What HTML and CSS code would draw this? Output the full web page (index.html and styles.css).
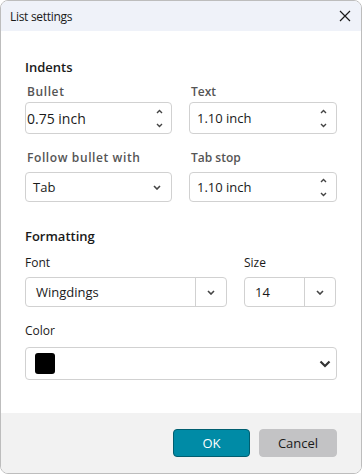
FILE: index.html
```html
<!DOCTYPE html>
<html lang="en">
<head>
    <meta charset="UTF-8">
    <title>List settings</title>
    <link rel="stylesheet" href="styles.css">
</head>
<body>
    <div class="dialog">
        <div class="title-bar">
            <div class="title">List settings</div>
            <svg class="close" width="12" height="12" viewBox="0 0 12 12"><path d="M1 1 L11 11 M11 1 L1 11" stroke="#1a1a1a" stroke-width="1.2" fill="none"/></svg>
        </div>

        <div class="content">
            <div class="section-title">Indents</div>
            <div class="grid">
                <div class="field">
                    <div class="label spaced">Bullet</div>
                    <div class="input bullet">
                        <span class="value">0.75 inch</span>
                        <span class="spin">
                            <svg width="7" height="5" viewBox="0 0 7 5"><path d="M1 4 L3.5 1.5 L6 4" stroke="#444" stroke-width="1.4" fill="none"/></svg>
                            <svg width="7" height="5" viewBox="0 0 7 5"><path d="M1 1 L3.5 3.5 L6 1" stroke="#444" stroke-width="1.4" fill="none"/></svg>
                        </span>
                    </div>
                </div>
                <div class="field">
                    <div class="label">Text</div>
                    <div class="input">
                        <span class="value">1.10 inch</span>
                        <span class="spin">
                            <svg width="7" height="5" viewBox="0 0 7 5"><path d="M1 4 L3.5 1.5 L6 4" stroke="#444" stroke-width="1.4" fill="none"/></svg>
                            <svg width="7" height="5" viewBox="0 0 7 5"><path d="M1 1 L3.5 3.5 L6 1" stroke="#444" stroke-width="1.4" fill="none"/></svg>
                        </span>
                    </div>
                </div>
                <div class="field row-two">
                    <div class="label spaced">Follow bullet with</div>
                    <div class="input short">
                        <span class="value">Tab</span>
                        <svg class="chev" width="8" height="5" viewBox="0 0 8 5"><path d="M1 1 L4 4 L7 1" stroke="#444" stroke-width="1.6" fill="none"/></svg>
                    </div>
                </div>
                <div class="field row-two">
                    <div class="label">Tab stop</div>
                    <div class="input short">
                        <span class="value">1.10 inch</span>
                        <span class="spin">
                            <svg width="7" height="5" viewBox="0 0 7 5"><path d="M1 4 L3.5 1.5 L6 4" stroke="#444" stroke-width="1.4" fill="none"/></svg>
                            <svg width="7" height="5" viewBox="0 0 7 5"><path d="M1 1 L3.5 3.5 L6 1" stroke="#444" stroke-width="1.4" fill="none"/></svg>
                        </span>
                    </div>
                </div>
            </div>

            <div class="section-title formatting">Formatting</div>
            <div class="font-row">
                <div class="field font-field">
                    <div class="label">Font</div>
                    <div class="combo">
                        <span class="value">Wingdings</span>
                        <span class="combo-btn">
                            <svg width="8" height="5" viewBox="0 0 8 5"><path d="M1 1 L4 4 L7 1" stroke="#444" stroke-width="1.6" fill="none"/></svg>
                        </span>
                    </div>
                </div>
                <div class="field size-field">
                    <div class="label">Size</div>
                    <div class="combo">
                        <span class="value">14</span>
                        <span class="combo-btn">
                            <svg width="8" height="5" viewBox="0 0 8 5"><path d="M1 1 L4 4 L7 1" stroke="#444" stroke-width="1.6" fill="none"/></svg>
                        </span>
                    </div>
                </div>
            </div>

            <div class="field color-field">
                <div class="label">Color</div>
                <div class="input color-input">
                    <span class="swatch"></span>
                    <svg class="chev" width="12" height="8" viewBox="0 0 12 8"><path d="M1.5 1.5 L6 6 L10.5 1.5" stroke="#333" stroke-width="2.2" fill="none"/></svg>
                </div>
            </div>
        </div>

        <div class="footer">
            <button class="btn btn-ok">OK</button>
            <button class="btn btn-cancel">Cancel</button>
        </div>
    </div>
</body>
</html>
```

FILE: styles.css
```css
* {
    margin: 0;
    padding: 0;
    box-sizing: border-box;
}

body {
    font-family: 'Open Sans', 'Noto Sans', sans-serif;
    color: #1a1a1a;
    background: #ffffff;
}

.dialog {
    width: 362px;
    height: 474px;
    border: 1px solid #bdbdbd;
    border-radius: 8px;
    overflow: hidden;
    display: flex;
    flex-direction: column;
    background: #ffffff;
}

.title-bar {
    height: 30px;
    background: #eff2f9;
    display: flex;
    align-items: center;
    justify-content: space-between;
    padding: 0 9px 0 9px;
    flex-shrink: 0;
}

.title {
    font-size: 12px;
    letter-spacing: -0.3px;
    color: #1a1a1a;
}

.close {
    margin-right: 1px;
}

.content {
    flex: 1;
    padding: 26px 24px 0 24px;
}

.section-title {
    font-size: 13px;
    font-weight: 600;
    line-height: 20px;
    color: #1a1a1a;
}

.section-title.formatting {
    margin-top: 24px;
}

.grid {
    display: grid;
    grid-template-columns: 147px 148px;
    column-gap: 17px;
    row-gap: 16px;
    margin-top: 7px;
}

.field {
    display: flex;
    flex-direction: column;
}

.label {
    font-size: 12px;
    font-weight: 600;
    line-height: 16px;
    color: #555555;
    padding-left: 2px;
    margin-bottom: 2px;
}

.label.spaced {
    letter-spacing: 0.6px;
}

.row-two .label {
    margin-bottom: 6px;
}

.input {
    height: 32px;
    border: 1px solid #d1d1d1;
    border-radius: 4px;
    display: flex;
    align-items: center;
    justify-content: space-between;
    padding: 0 9px 0 7px;
    background: #ffffff;
}

.input.bullet {
    padding-left: 1px;
    padding-right: 8px;
}

.input.bullet .value {
    font-size: 14px;
}

.input.short {
    height: 30px;
}

.value {
    font-size: 13px;
    color: #1a1a1a;
}

.spin {
    display: flex;
    flex-direction: column;
    gap: 9px;
}

.spin svg {
    display: block;
}

.chev {
    margin-right: 1px;
}

.font-row {
    display: flex;
    gap: 17px;
    margin-top: 9px;
}

.font-field {
    width: 202px;
}

.size-field {
    width: 92px;
}

.font-row .label {
    color: #1a1a1a;
    font-weight: 400;
    padding-left: 0;
    margin-bottom: 6px;
}

.combo {
    height: 30px;
    border: 1px solid #d1d1d1;
    border-radius: 4px;
    display: flex;
    align-items: center;
}

.combo .value {
    flex: 1;
    padding-left: 10px;
}

.combo-btn {
    width: 31px;
    height: 100%;
    border-left: 1px solid #d1d1d1;
    display: flex;
    align-items: center;
    justify-content: center;
}

.color-field {
    margin-top: 16px;
    width: 312px;
}

.color-field .label {
    color: #1a1a1a;
    font-weight: 400;
    padding-left: 0;
    margin-bottom: 8px;
}

.color-input {
    height: 33px;
    padding: 0 4px 0 9px;
}

.swatch {
    width: 20px;
    height: 21px;
    background: #000000;
    border-radius: 3px;
}

.footer {
    height: 60px;
    background: #f2f2f2;
    display: flex;
    justify-content: flex-end;
    align-items: flex-start;
    gap: 9px;
    padding: 16px 24px 0 0;
    flex-shrink: 0;
}

.btn {
    width: 77px;
    height: 28px;
    border-radius: 4px;
    font-family: 'Open Sans', 'Noto Sans', sans-serif;
    font-size: 13px;
}

.btn-ok {
    background: #008ba6;
    color: #ffffff;
    border: 1px solid #005e70;
}

.btn-cancel {
    width: 78px;
    background: #c3c3c5;
    color: #1a1a1a;
    border: 1px solid #c3c3c5;
}
```
